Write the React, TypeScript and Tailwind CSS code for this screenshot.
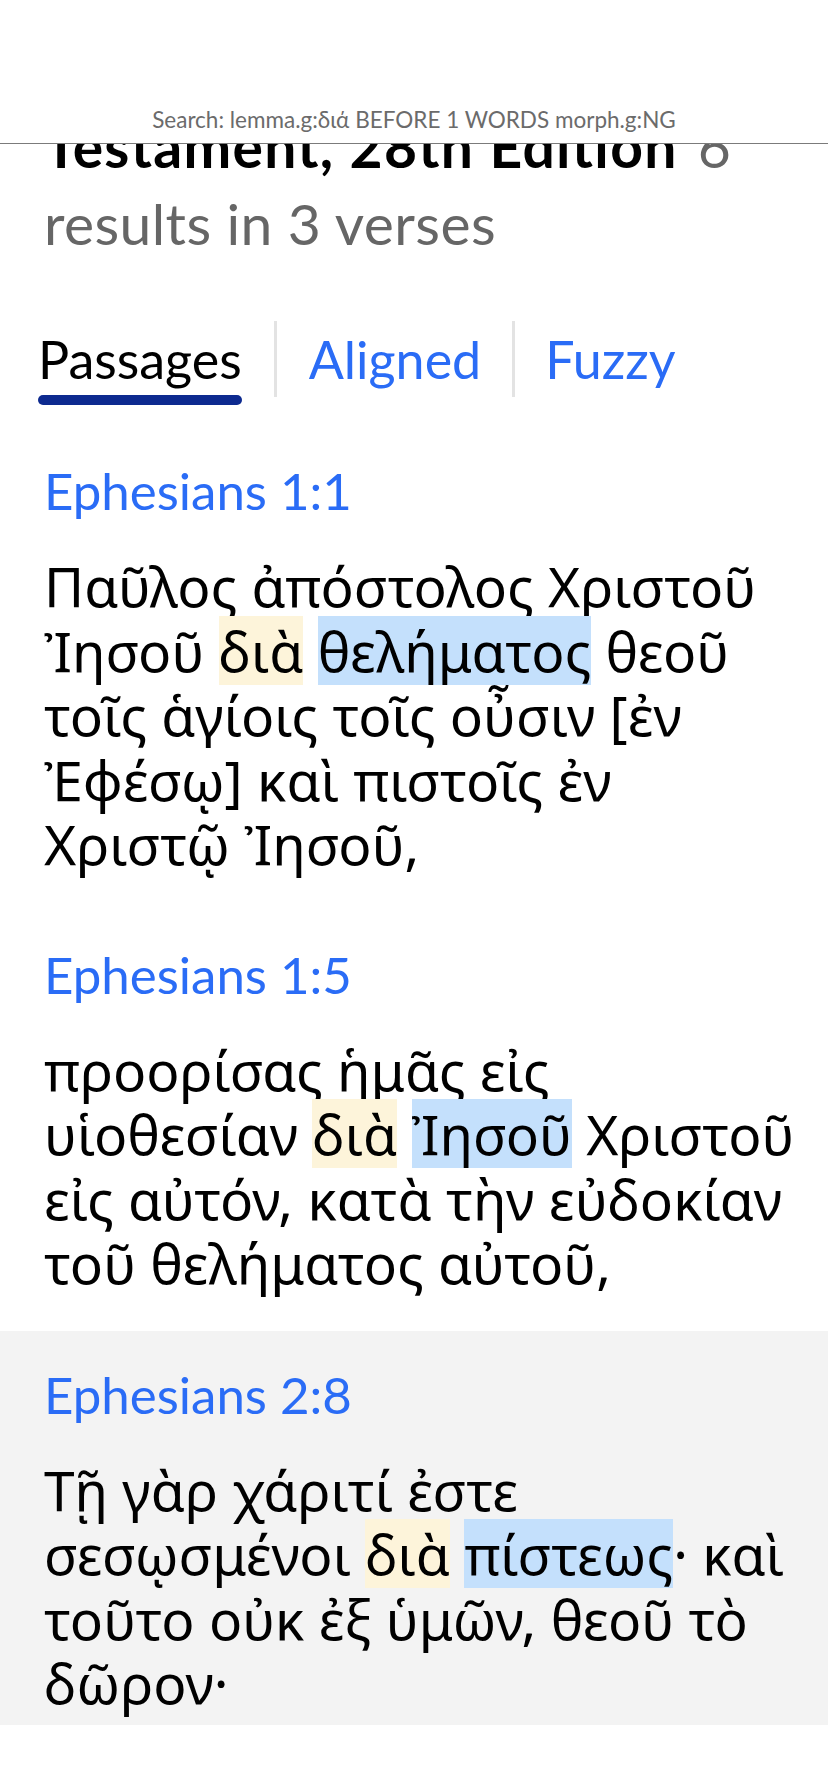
import React from "react";

const LATIN = { fontFamily: 'Lato, "Noto Sans", sans-serif' };
const GREEK = { fontFamily: '"Noto Sans", "DejaVu Sans", sans-serif' };

function Y({ children }: { children: React.ReactNode }) {
  return (
    <span className="inline-block bg-[#fdf4da] leading-[69px] -my-[3px]">{children}</span>
  );
}
function B({ children }: { children: React.ReactNode }) {
  return (
    <span className="inline-block bg-[#c4e0fc] leading-[69px] -my-[3px]">{children}</span>
  );
}

function Verse({
  title,
  lines,
  shaded,
  pb,
}: {
  title: string;
  lines: React.ReactNode[];
  shaded?: boolean;
  pb: string;
}) {
  return (
    <section className={`px-[44px] pt-[26px] ${pb} ${shaded ? "bg-[#f3f3f3]" : ""}`}>
      <h2 className="text-[51px] leading-[76px] text-[#2a6cf6] font-normal" style={LATIN}>
        {title}
      </h2>
      <p
        className="mt-[25px] text-[55px] leading-[64.5px] text-black whitespace-nowrap"
        style={GREEK}
      >
        {lines.map((l, i) => (
          <React.Fragment key={i}>
            {l}
            {i < lines.length - 1 && <br />}
          </React.Fragment>
        ))}
      </p>
    </section>
  );
}

export default function App() {
  return (
    <div className="relative w-[828px] min-h-[1792px] bg-white overflow-hidden">
      {/* fixed header overlaying scrolled content */}
      <header className="absolute inset-x-0 top-0 z-10 h-[144px] bg-white border-b border-[#7b7b7b] flex items-end justify-center pb-[8px]">
        <span className="text-[22.5px] leading-[30px] text-[#6b6b6b]" style={LATIN}>
          Search: lemma.g:διά BEFORE 1 WORDS morph.g:NG
        </span>
      </header>

      <main>
        {/* result summary (scrolled partly under the header) */}
        <div className="pt-[31px] px-[44px] text-[57px] leading-[77px] whitespace-nowrap" style={LATIN}>
          <span className="font-bold text-black tracking-[1.3px]">Nestle-Aland Greek New</span>
          <br />
          <span className="font-bold text-black tracking-[1.3px]">Testament, 28th Edition</span>
          <span className="ml-[20px] text-[#666666]">6</span>
          <br />
          <span className="text-[#666666] tracking-[0.4px]">results in 3 verses</span>
        </div>

        {/* tabs */}
        <nav className="mt-[59px] flex items-start pl-[38px] text-[52px] leading-[76px]" style={LATIN}>
          <div className="flex flex-col">
            <span className="text-black">Passages</span>
            <span className="-mt-[2px] h-[10px] rounded-full bg-[#0d2a8f]"></span>
          </div>
          <span className="mx-[32px] h-[76px] w-[3px] bg-[#e3e3e3]"></span>
          <span className="text-[#2a6cf6]">Aligned</span>
          <span className="ml-[31px] mr-[30px] h-[76px] w-[3px] bg-[#e3e3e3]"></span>
          <span className="text-[#2a6cf6]">Fuzzy</span>
        </nav>

        <div className="mt-[22px]">
          <Verse
            title="Ephesians 1:1"
            pb="pb-[34px]"
            lines={[
              <>Παῦλος ἀπόστολος Χριστοῦ</>,
              <>
                Ἰησοῦ <Y>διὰ</Y> <B>θελήματος</B> θεοῦ
              </>,
              <>τοῖς ἁγίοις τοῖς οὖσιν [ἐν</>,
              <>Ἐφέσῳ] καὶ πιστοῖς ἐν</>,
              <>Χριστῷ Ἰησοῦ,</>,
            ]}
          />
          <Verse
            title="Ephesians 1:5"
            pb="pb-[35px]"
            lines={[
              <>προορίσας ἡμᾶς εἰς</>,
              <>
                υἱοθεσίαν <Y>διὰ</Y> <B>Ἰησοῦ</B> Χριστοῦ
              </>,
              <>εἰς αὐτόν, κατὰ τὴν εὐδοκίαν</>,
              <>τοῦ θελήματος αὐτοῦ,</>,
            ]}
          />
          <Verse
            title="Ephesians 2:8"
            shaded
            pb="pb-[9px]"
            lines={[
              <>Τῇ γὰρ χάριτί ἐστε</>,
              <>
                σεσῳσμένοι <Y>διὰ</Y> <B>πίστεως</B>· καὶ
              </>,
              <>τοῦτο οὐκ ἐξ ὑμῶν, θεοῦ τὸ</>,
              <>δῶρον·</>,
            ]}
          />
        </div>
      </main>
    </div>
  );
}
